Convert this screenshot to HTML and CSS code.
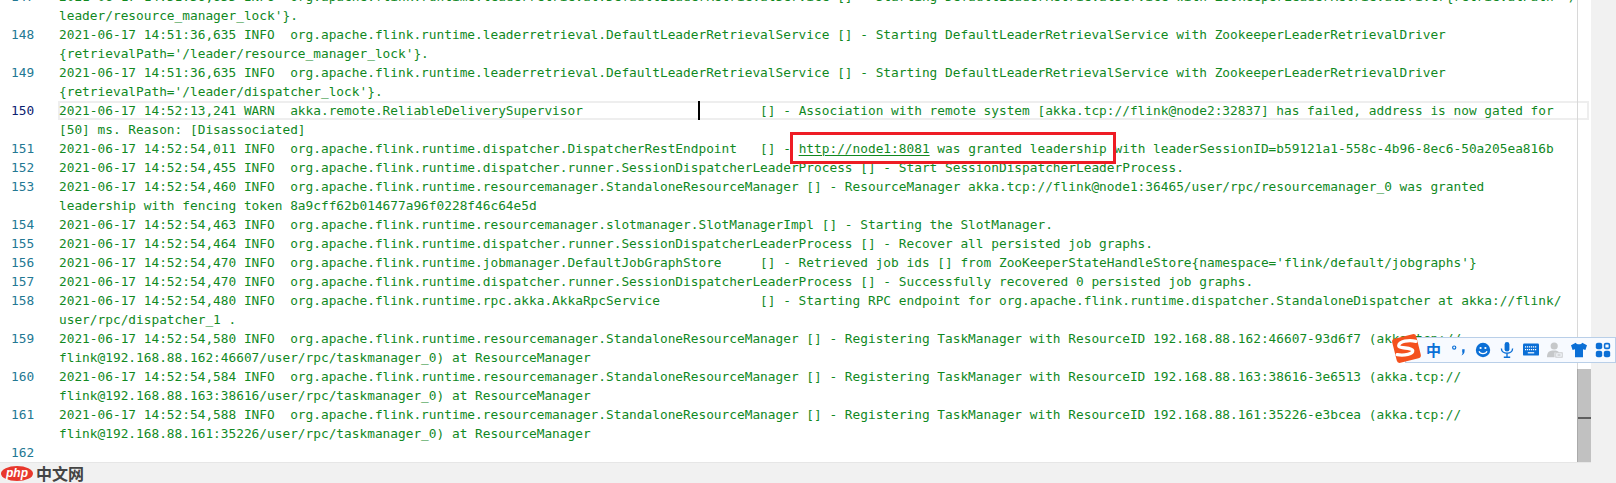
FILE: index.html
```html
<!DOCTYPE html>
<html lang="en">
<head>
<meta charset="utf-8">
<title>Flink log</title>
<link rel="stylesheet" href="styles.css">
</head>
<body>
<div class="page">
  <main class="editor">
    <div class="lines">
      <div class="row"><span class="num">147</span><div class="code">2021-06-17 14:51:36,635 INFO  org.apache.flink.runtime.leaderretrieval.DefaultLeaderRetrievalService [] - Starting DefaultLeaderRetrievalService with ZookeeperLeaderRetrievalDriver{retrievalPath='/<br>leader/resource_manager_lock'}.</div></div>
      <div class="row"><span class="num">148</span><div class="code">2021-06-17 14:51:36,635 INFO  org.apache.flink.runtime.leaderretrieval.DefaultLeaderRetrievalService [] - Starting DefaultLeaderRetrievalService with ZookeeperLeaderRetrievalDriver<br>{retrievalPath='/leader/resource_manager_lock'}.</div></div>
      <div class="row"><span class="num">149</span><div class="code">2021-06-17 14:51:36,635 INFO  org.apache.flink.runtime.leaderretrieval.DefaultLeaderRetrievalService [] - Starting DefaultLeaderRetrievalService with ZookeeperLeaderRetrievalDriver<br>{retrievalPath='/leader/dispatcher_lock'}.</div></div>
      <div class="row active"><span class="num">150</span><div class="code"><span class="current">2021-06-17 14:52:13,241 WARN  akka.remote.ReliableDeliverySupervisor<span class="caret"></span>                       [] - Association with remote system [akka.tcp://flink@node2:32837] has failed, address is now gated for</span>[50] ms. Reason: [Disassociated]</div></div>
      <div class="row"><span class="num">151</span><div class="code">2021-06-17 14:52:54,011 INFO  org.apache.flink.runtime.dispatcher.DispatcherRestEndpoint   [] - <span class="link">http://node1:8081</span> was granted leadership with leaderSessionID=b59121a1-558c-4b96-8ec6-50a205ea816b</div></div>
      <div class="row"><span class="num">152</span><div class="code">2021-06-17 14:52:54,455 INFO  org.apache.flink.runtime.dispatcher.runner.SessionDispatcherLeaderProcess [] - Start SessionDispatcherLeaderProcess.</div></div>
      <div class="row"><span class="num">153</span><div class="code">2021-06-17 14:52:54,460 INFO  org.apache.flink.runtime.resourcemanager.StandaloneResourceManager [] - ResourceManager akka.tcp://flink@node1:36465/user/rpc/resourcemanager_0 was granted<br>leadership with fencing token 8a9cff62b014677a96f0228f46c64e5d</div></div>
      <div class="row"><span class="num">154</span><div class="code">2021-06-17 14:52:54,463 INFO  org.apache.flink.runtime.resourcemanager.slotmanager.SlotManagerImpl [] - Starting the SlotManager.</div></div>
      <div class="row"><span class="num">155</span><div class="code">2021-06-17 14:52:54,464 INFO  org.apache.flink.runtime.dispatcher.runner.SessionDispatcherLeaderProcess [] - Recover all persisted job graphs.</div></div>
      <div class="row"><span class="num">156</span><div class="code">2021-06-17 14:52:54,470 INFO  org.apache.flink.runtime.jobmanager.DefaultJobGraphStore     [] - Retrieved job ids [] from ZooKeeperStateHandleStore{namespace='flink/default/jobgraphs'}</div></div>
      <div class="row"><span class="num">157</span><div class="code">2021-06-17 14:52:54,470 INFO  org.apache.flink.runtime.dispatcher.runner.SessionDispatcherLeaderProcess [] - Successfully recovered 0 persisted job graphs.</div></div>
      <div class="row"><span class="num">158</span><div class="code">2021-06-17 14:52:54,480 INFO  org.apache.flink.runtime.rpc.akka.AkkaRpcService             [] - Starting RPC endpoint for org.apache.flink.runtime.dispatcher.StandaloneDispatcher at akka://flink/<br>user/rpc/dispatcher_1 .</div></div>
      <div class="row"><span class="num">159</span><div class="code">2021-06-17 14:52:54,580 INFO  org.apache.flink.runtime.resourcemanager.StandaloneResourceManager [] - Registering TaskManager with ResourceID 192.168.88.162:46607-93d6f7 (akka.tcp://<br>flink@192.168.88.162:46607/user/rpc/taskmanager_0) at ResourceManager</div></div>
      <div class="row"><span class="num">160</span><div class="code">2021-06-17 14:52:54,584 INFO  org.apache.flink.runtime.resourcemanager.StandaloneResourceManager [] - Registering TaskManager with ResourceID 192.168.88.163:38616-3e6513 (akka.tcp://<br>flink@192.168.88.163:38616/user/rpc/taskmanager_0) at ResourceManager</div></div>
      <div class="row"><span class="num">161</span><div class="code">2021-06-17 14:52:54,588 INFO  org.apache.flink.runtime.resourcemanager.StandaloneResourceManager [] - Registering TaskManager with ResourceID 192.168.88.161:35226-e3bcea (akka.tcp://<br>flink@192.168.88.161:35226/user/rpc/taskmanager_0) at ResourceManager</div></div>
      <div class="row"><span class="num">162</span><div class="code"></div></div>
    </div>
    <div class="ruler"></div>
    <div class="scrollbar"><div class="thumb"><span class="grip"></span></div></div>
  </main>
  <footer class="footer"><span class="php">php</span><span class="cn">中文网</span></footer>
</div>
<div class="redbox"></div>
<div class="ime">
  <svg class="ime-logo" viewBox="0 0 32 32"><rect x="4" y="4" width="24" height="24" rx="3" fill="#f4511e" transform="rotate(-14 16 16)"/><path d="M25 9C18 7.500 9 9 8.500 13 8.200 16.500 21 14.500 22 18 22.500 21.500 14 23 7 22" fill="none" stroke="#fff" stroke-width="3.200" stroke-linecap="round"/></svg>
  <span class="zh">中</span>
  <svg class="i" viewBox="0 0 20 20"><circle cx="4" cy="7" r="2" fill="none" stroke="#0b6fd6" stroke-width="1.500"/><path d="M14 9h3v2c0 3-1.500 5-4 6 1-1.500 1.500-3 1.500-4H14z" fill="#0b6fd6"/></svg>
  <svg class="i" viewBox="0 0 20 20"><circle cx="10" cy="10" r="9" fill="#0b6fd6"/><circle cx="7" cy="7.500" r="1.400" fill="#fff"/><circle cx="13" cy="7.500" r="1.400" fill="#fff"/><path d="M5 11.500c1.500 4 8.500 4 10 0" fill="none" stroke="#fff" stroke-width="1.500"/></svg>
  <svg class="i" viewBox="0 0 20 20"><rect x="7" y="0" width="6" height="12" rx="3" fill="#0b6fd6"/><path d="M3 8c0 8 14 8 14 0M10 14v4M6 19h8" fill="none" stroke="#0b6fd6" stroke-width="1.700"/></svg>
  <svg class="i" viewBox="0 0 20 20"><rect x="0" y="2" width="20" height="15" rx="1.500" fill="#0b6fd6"/><path d="M2.500 6h15M2.500 9.500h15" stroke="#fff" stroke-width="1.500" stroke-dasharray="1.500 1"/><path d="M6 13.500h8" stroke="#fff" stroke-width="1.500"/></svg>
  <svg class="i" viewBox="0 0 20 20"><circle cx="9" cy="5" r="4.500" fill="#c6c8ca"/><path d="M0 19c0-7 3-8.500 9-8.500 3 0 5 .5 6 2.500H9.500v6z" fill="#c6c8ca"/><rect x="11" y="13.500" width="8" height="5.500" fill="none" stroke="#c6c8ca" stroke-width="1.200"/><path d="M13 15.500h4M13 17h4" stroke="#c6c8ca"/></svg>
  <svg class="i" viewBox="0 0 20 20"><path d="M6 1 0 4l2 6 3-1v10h10V9l3 1 2-6-6-3c-1 2.500-7 2.500-8 0z" fill="#0b6fd6"/></svg>
  <svg class="i" viewBox="0 0 20 20"><rect x="1" y="1" width="8" height="8" rx="2.500" fill="#0b6fd6"/><rect x="12" y="2" width="6" height="6" rx="1.500" fill="none" stroke="#0b6fd6" stroke-width="2"/><rect x="1" y="11" width="8" height="8" rx="2.500" fill="#0b6fd6"/><rect x="11" y="11" width="8" height="8" rx="2.500" fill="#0b6fd6"/></svg>
</div>
</body>
</html>
```
FILE: styles.css
```css
* { box-sizing: border-box; }
html, body { margin: 0; height: 100%; overflow: hidden; background: #f1f1f1; }
body { position: relative; width: 1616px; height: 483px; }
.page { width: 1616px; height: 483px; display: flex; flex-direction: column; }
.editor { position: relative; width: 1591px; height: 463px; background: #fff; overflow: hidden; border-bottom: 1px solid #e6e6e6; flex: none; }
.lines { margin-top: -13px; font: 12.81px/19px "DejaVu Sans Mono", monospace; color: #11891f; }
.row { display: flex; }
.num { width: 59px; flex: none; padding-left: 11px; color: #237893; }
.active .num { color: #0b216f; }
.code { white-space: pre; flex: 1; }
.current { display: block; position: relative; width: 1531px; margin-left: -1px; padding-left: 1px; box-shadow: inset 0 0 0 2px #eeeeee; }
.caret { position: absolute; left: 640px; top: 0; width: 2px; height: 19px; background: #000; }
.link { text-decoration: underline; text-underline-offset: 2px; }
.ruler { position: absolute; left: 1577px; top: 0; bottom: 0; width: 1px; background: #d8d8d8; }
.scrollbar { position: absolute; right: 0; top: 0; bottom: 0; width: 14px; }
.thumb { position: absolute; left: 0; right: 0; top: 369px; bottom: 0; background: #c1c1c1; border-left: 1px solid #aaa; }
.grip { position: absolute; left: 0; right: 0; top: 48px; height: 2px; background: #5e5e5e; }
.footer { flex: 1; display: flex; align-items: center; padding-left: 1px; background: #f1f1f1; }
.php { font: italic 700 12px/15px "Liberation Sans", sans-serif; color: #fff; background: #e8372c; border-radius: 50%; padding: 0 5px; }
.cn { font: 700 16px/18px "Noto Sans CJK SC", sans-serif; color: #444; margin-left: 3px; }
.redbox { position: absolute; left: 790px; top: 132px; width: 326px; height: 32px; border: 3px solid #ee1c25; }
.ime { position: absolute; left: 1405px; top: 337px; width: 211px; height: 26px; background: #f7faff; border: 1px solid #b9cfe8; display: flex; align-items: center; gap: 8px; padding-left: 20px; }
.ime-logo { position: absolute; left: -16px; top: -6px; width: 33px; height: 33px; }
.zh { font: 700 15px/20px "Noto Sans CJK SC", sans-serif; color: #0b6fd6; margin-right: 2px; }
.i { width: 16px; height: 16px; flex: none; }
```
